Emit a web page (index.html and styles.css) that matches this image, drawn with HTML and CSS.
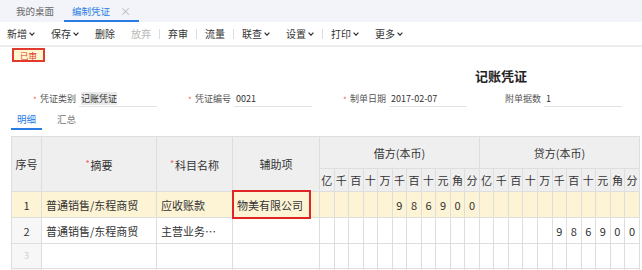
FILE: index.html
```html
<!DOCTYPE html>
<html lang="zh-CN">

<head>
    <meta charset="UTF-8">
    <meta name="viewport" content="width=device-width, initial-scale=1.0">
    <title>编制凭证</title>
    <link rel="stylesheet" href="styles.css">
</head>

<body>
    <div class="tabbar">
        <span class="tab">我的桌面</span>
        <span class="tab tab-active">编制凭证<span class="tab-close">×</span></span>
    </div>

    <div class="toolbar">
        <span class="tool">新增<svg class="caret" viewBox="0 0 6 4"><path d="M0.6 0.6 L3 3.2 L5.4 0.6"/></svg></span>
        <span class="tool">保存<svg class="caret" viewBox="0 0 6 4"><path d="M0.6 0.6 L3 3.2 L5.4 0.6"/></svg></span>
        <span class="tool">删除</span>
        <span class="tool tool-off">放弃</span>
        <span class="sep"></span>
        <span class="tool">弃审</span>
        <span class="sep"></span>
        <span class="tool">流量</span>
        <span class="sep"></span>
        <span class="tool">联查<svg class="caret" viewBox="0 0 6 4"><path d="M0.6 0.6 L3 3.2 L5.4 0.6"/></svg></span>
        <span class="tool">设置<svg class="caret" viewBox="0 0 6 4"><path d="M0.6 0.6 L3 3.2 L5.4 0.6"/></svg></span>
        <span class="sep"></span>
        <span class="tool">打印<svg class="caret" viewBox="0 0 6 4"><path d="M0.6 0.6 L3 3.2 L5.4 0.6"/></svg></span>
        <span class="tool">更多<svg class="caret" viewBox="0 0 6 4"><path d="M0.6 0.6 L3 3.2 L5.4 0.6"/></svg></span>
    </div>

    <main class="voucher">
        <div class="stamp">已审</div>
        <h1 class="title">记账凭证</h1>

        <div class="fields">
            <div class="field">
                <span class="req">*</span><span class="label">凭证类别</span>
                <span class="value"><span class="value-sel">记账凭证</span></span>
            </div>
            <div class="field">
                <span class="req">*</span><span class="label">凭证编号</span>
                <span class="value">0021</span>
            </div>
            <div class="field">
                <span class="req">*</span><span class="label">制单日期</span>
                <span class="value">2017-02-07</span>
            </div>
            <div class="field">
                <span class="req req-none">*</span><span class="label">附单据数</span>
                <span class="value">1</span>
            </div>
        </div>

        <div class="subtabs">
            <span class="subtab subtab-active">明细</span>
            <span class="subtab">汇总</span>
        </div>

        <table class="grid">
            <colgroup>
                <col class="c-no">
                <col class="c-memo">
                <col class="c-acct">
                <col class="c-aux">
                <col span="22" class="c-digit">
            </colgroup>
            <thead>
                <tr class="head-1">
                    <th rowspan="2">序号</th>
                    <th rowspan="2"><span class="star">*</span>摘要</th>
                    <th rowspan="2"><span class="star">*</span>科目名称</th>
                    <th rowspan="2">辅助项</th>
                    <th colspan="11">借方(本币)</th>
                    <th colspan="11">贷方(本币)</th>
                </tr>
                <tr class="head-2">
                    <th>亿</th><th>千</th><th>百</th><th>十</th><th>万</th><th>千</th><th>百</th><th>十</th><th>元</th><th>角</th><th>分</th>
                    <th>亿</th><th>千</th><th>百</th><th>十</th><th>万</th><th>千</th><th>百</th><th>十</th><th>元</th><th>角</th><th>分</th>
                </tr>
            </thead>
            <tbody>
                <tr class="row-current">
                    <td class="no">1</td>
                    <td>普通销售/东程商贸</td>
                    <td>应收账款</td>
                    <td class="aux">物美有限公司<span class="mark"></span></td>
                    <td></td><td></td><td></td><td></td><td></td><td class="d">9</td><td class="d">8</td><td class="d">6</td><td class="d">9</td><td class="d">0</td><td class="d">0</td>
                    <td></td><td></td><td></td><td></td><td></td><td></td><td></td><td></td><td></td><td></td><td></td>
                </tr>
                <tr>
                    <td class="no">2</td>
                    <td>普通销售/东程商贸</td>
                    <td>主营业务…</td>
                    <td></td>
                    <td></td><td></td><td></td><td></td><td></td><td></td><td></td><td></td><td></td><td></td><td></td>
                    <td></td><td></td><td></td><td></td><td></td><td class="d">9</td><td class="d">8</td><td class="d">6</td><td class="d">9</td><td class="d">0</td><td class="d">0</td>
                </tr>
                <tr class="row-short">
                    <td class="no no-empty">3</td>
                    <td></td><td></td><td></td>
                    <td></td><td></td><td></td><td></td><td></td><td></td><td></td><td></td><td></td><td></td><td></td>
                    <td></td><td></td><td></td><td></td><td></td><td></td><td></td><td></td><td></td><td></td><td></td>
                </tr>
                <tr class="row-short">
                    <td class="no"></td>
                    <td></td><td></td><td></td>
                    <td></td><td></td><td></td><td></td><td></td><td></td><td></td><td></td><td></td><td></td><td></td>
                    <td></td><td></td><td></td><td></td><td></td><td></td><td></td><td></td><td></td><td></td><td></td>
                </tr>
            </tbody>
        </table>
    </main>
</body>

</html>
```

FILE: styles.css
```css
body {
    margin: 0;
    font-family: "Noto Sans CJK SC", sans-serif;
    color: #333;
    background-color: #fff;
    overflow: hidden;
}

/* top tabs */
.tabbar {
    display: flex;
    height: 22px;
    padding-left: 8px;
    background-color: #f2f4f9;
}

.tab {
    display: flex;
    align-items: center;
    padding: 2px 8px 0;
    font-size: 9.5px;
    line-height: 12px;
    color: #666;
    box-sizing: border-box;
    border-bottom: 2px solid transparent;
}

.tab-active {
    margin-left: 2px;
    color: #2a7be4;
    border-bottom-color: #2a7be4;
}

.tab-close {
    margin-left: 10px;
    font-size: 11px;
    color: #b5b9c2;
}

/* toolbar */
.toolbar {
    display: flex;
    align-items: center;
    gap: 16px;
    height: 23px;
    padding-left: 7px;
    border-bottom: 2px solid #ececec;
}

.tool {
    display: flex;
    align-items: center;
    font-size: 10px;
    line-height: 12px;
    color: #333;
}

.tool-off {
    color: #b8b8b8;
}

.caret {
    width: 6px;
    height: 4px;
    margin-left: 2px;
    fill: none;
    stroke: #333;
    stroke-width: 1.2;
}

.sep {
    width: 1px;
    height: 10px;
    margin: 0 -8px;
    background-color: #dcdcdc;
}

/* voucher body */
.voucher {
    padding-top: 1px;
}

.stamp {
    display: flex;
    align-items: center;
    justify-content: center;
    width: 33px;
    height: 14px;
    margin-left: 12px;
    box-sizing: border-box;
    border: 2px solid #e23a2f;
    background-color: #fff7cf;
    color: #e23a2f;
    font-size: 8.5px;
    line-height: 10px;
}

.title {
    margin: 6px 0 0 475px;
    font-size: 13px;
    line-height: 16px;
    font-weight: bold;
    color: #222;
}

.fields {
    display: flex;
    gap: 31px;
    margin-top: 7px;
    padding-left: 33px;
}

.field {
    display: flex;
    align-items: center;
    height: 16px;
    font-size: 9px;
}

.req {
    width: 7px;
    color: #f06060;
    font-size: 8px;
}

.req-none {
    visibility: hidden;
}

.label {
    color: #555;
    line-height: 12px;
}

.value {
    width: 78px;
    height: 15px;
    margin-left: 3px;
    padding-left: 2px;
    box-sizing: border-box;
    border-bottom: 1px solid #e3e3e3;
    line-height: 14px;
    color: #333;
}

.value-sel {
    background-color: #e9e9e9;
}

.subtabs {
    display: flex;
    margin: 3px 0 0 11px;
}

.subtab {
    padding: 2px 6px 0;
    height: 16px;
    font-size: 9.5px;
    line-height: 14px;
    color: #777;
    border-bottom: 2px solid transparent;
}

.subtab + .subtab {
    margin-left: 9px;
}

.subtab-active {
    color: #2a7be4;
    border-bottom-color: #2a7be4;
}

/* grid */
.grid {
    width: 629px;
    margin: 6px 0 0 11px;
    border-collapse: collapse;
    table-layout: fixed;
    font-size: 11px;
    line-height: 14px;
}

.c-no {
    width: 30px;
}

.c-memo {
    width: 115px;
}

.c-acct {
    width: 76px;
}

.c-aux {
    width: 87px;
}

.grid th,
.grid td {
    border: 1px solid #dedede;
    padding: 0;
    white-space: nowrap;
    overflow: hidden;
}

.grid th {
    background-color: #efefef;
    font-weight: normal;
    color: #333;
}

.head-1 th {
    height: 31px;
}

.head-2 th {
    height: 22px;
}

.star {
    color: #f06060;
    font-size: 9px;
    vertical-align: 3px;
    margin-right: 1px;
}

.grid td {
    height: 25px;
    padding-left: 4px;
}

.grid td.d {
    padding: 0;
    text-align: center;
}

.grid td.no {
    padding: 0;
    text-align: center;
    background-color: #f7f7f7;
}

.grid .no-empty {
    color: #d0d0d0;
    font-size: 9px;
}

.row-short td {
    height: 24px;
}

.row-current td,
.row-current td.no {
    background-color: #fdf4d6;
}

.grid td.aux {
    position: relative;
    overflow: visible;
}

/* red frame drawn over the auxiliary cell */
.mark {
    position: absolute;
    left: -1px;
    top: -2px;
    bottom: -2px;
    width: 79px;
    border: 2px solid #e02525;
    box-sizing: border-box;
}
```
